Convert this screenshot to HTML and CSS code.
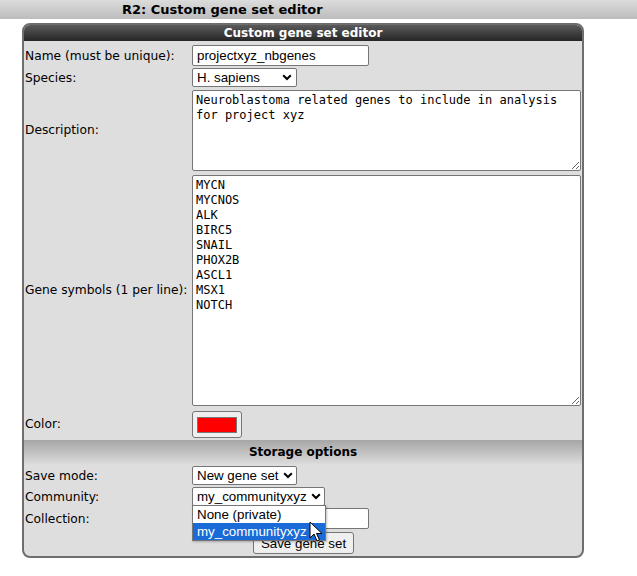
FILE: index.html
```html
<!DOCTYPE html>
<html>
<head>
<meta charset="utf-8">
<link rel="stylesheet" href="styles.css">
</head>
<body>
<div class="topbar"><span class="toptitle">R2: Custom gene set editor</span></div>
<div class="panel">
  <div class="panel-head">Custom gene set editor</div>
  <div class="form">
    <div class="lbl">Name (must be unique):</div>
    <div class="ctl"><input class="txt" type="text" value="projectxyz_nbgenes"></div>

    <div class="lbl">Species:</div>
    <div class="ctl"><div class="sel sel-species"><span>H. sapiens</span><svg class="chev" width="10" height="7" viewBox="0 0 10 7"><path d="M1.2 1.2 L5 5 L8.8 1.2" fill="none" stroke="#000" stroke-width="2"/></svg></div></div>

    <div class="lbl">Description:</div>
    <div class="ctl"><textarea class="area area-desc">Neuroblastoma related genes to include in analysis for project xyz</textarea></div>

    <div class="lbl">Gene symbols (1 per line):</div>
    <div class="ctl"><textarea class="area area-genes">MYCN
MYCNOS
ALK
BIRC5
SNAIL
PHOX2B
ASCL1
MSX1
NOTCH</textarea></div>

    <div class="lbl">Color:</div>
    <div class="ctl"><span class="colorbtn"><span class="swatch"></span></span></div>

    <div class="subhead">Storage options</div>

    <div class="lbl">Save mode:</div>
    <div class="ctl"><div class="sel sel-mode"><span>New gene set</span><svg class="chev" width="10" height="7" viewBox="0 0 10 7"><path d="M1.2 1.2 L5 5 L8.8 1.2" fill="none" stroke="#000" stroke-width="2"/></svg></div></div>

    <div class="lbl">Community:</div>
    <div class="ctl community">
      <div class="sel sel-comm"><span>my_communityxyz</span><svg class="chev" width="10" height="7" viewBox="0 0 10 7"><path d="M1.2 1.2 L5 5 L8.8 1.2" fill="none" stroke="#000" stroke-width="2"/></svg></div>
      <div class="popup">
        <div class="opt">None (private)</div>
        <div class="opt opt-hi">my_communityxyz</div>
      </div>
      <svg class="cursor" width="14" height="22" viewBox="0 0 14 22"><path d="M1 1 L1 17 L5 13 L8 20 L10.5 19 L7.5 12.5 L13 12.5 Z" fill="#fff" stroke="#000" stroke-width="1" stroke-linejoin="round"/></svg>
    </div>

    <div class="lbl">Collection:</div>
    <div class="ctl"><input class="txt" type="text" value=""></div>

    <div class="actions"><button class="btn">Save gene set</button></div>
  </div>
</div>
</body>
</html>
```
FILE: styles.css
```css
html, body { margin: 0; padding: 0; background: #fff; }
body { font-family: "DejaVu Sans", Verdana, sans-serif; font-size: 12.25px; color: #000; }

.topbar {
  height: 19px;
  background: linear-gradient(#dcdcdc, #bcbcbc);
  display: flex;
  align-items: center;
}
.toptitle {
  margin-left: 122px;
  font-family: "DejaVu Sans", Verdana, sans-serif;
  font-weight: bold;
  font-size: 13px;
}

.panel {
  margin: 4px 0 0 22px;
  width: 558px;
  border: 2px solid #6e6e6e;
  border-radius: 8px;
  background: #dedede;
}
.panel-head {
  height: 16px;
  line-height: 16px;
  background: linear-gradient(#5a5a5a, #262626);
  color: #fff;
  text-align: center;
  font-family: "DejaVu Sans", Verdana, sans-serif;
  font-weight: bold;
  font-size: 12px;
  border-radius: 6px 6px 0 0;
}

.form {
  display: grid;
  grid-template-columns: 166px 1fr;
  column-gap: 1px;
  padding: 3px 0 1px 1px;
}
.lbl { display: flex; align-items: center; }
.ctl { display: flex; align-items: center; padding: 1px 0; position: relative; }

.txt {
  box-sizing: border-box;
  width: 177px;
  height: 21px;
  margin: 0;
  padding: 1px 4px;
  border: 1px solid #767676;
  border-radius: 2px;
  font-family: "Liberation Sans", Arial, sans-serif;
  font-size: 13.33px;
  background: #fff;
}
.sel {
  box-sizing: border-box;
  height: 19px;
  padding: 0 4px 0 4px;
  border: 1px solid #767676;
  border-radius: 2px;
  background: #fff;
  font-family: "Liberation Sans", Arial, sans-serif;
  font-size: 13.33px;
  color: #000;
  display: flex;
  align-items: center;
  justify-content: space-between;
  white-space: nowrap;
}
.chev { flex: none; margin-left: 4px; }
.sel-species { width: 105px; }
.sel-mode { width: 105px; }
.sel-comm { width: 133px; }

.area {
  box-sizing: border-box;
  width: 389px;
  margin: 0;
  padding: 2px 3px;
  border: 1px solid #767676;
  border-radius: 2px;
  font-family: "DejaVu Sans Mono", monospace;
  font-size: 12px;
  line-height: 15px;
  background: #fff;
  display: block;
}
.area-desc { height: 81px; margin-top: 1px; }
.area-genes { height: 231px; margin: 2px 0 1px; }

.colorbtn {
  box-sizing: border-box;
  width: 50px;
  height: 27px;
  border: 1px solid #767676;
  border-radius: 3px;
  background: #efefef;
  display: flex;
  align-items: center;
  justify-content: center;
  margin: 2px 0 0;
}
.swatch {
  width: 38px;
  height: 14px;
  background: #ff0000;
  border: 1px solid #777;
}

.subhead {
  grid-column: 1 / -1;
  margin-left: -1px;
  height: 25px;
  line-height: 25px;
  text-align: center;
  font-weight: bold;
  font-size: 12px;
  background: linear-gradient(#a6a6a6, #d8d8d8 92%, #dedede);
  margin-top: 1px;
}

.popup {
  position: absolute;
  left: 0;
  top: 19px;
  width: 134px;
  box-sizing: border-box;
  border: 1px solid #767676;
  background: #fff;
  font-family: "Liberation Sans", Arial, sans-serif;
  font-size: 13.33px;
  z-index: 5;
  box-shadow: 1px 1px 2px rgba(0,0,0,0.25);
}
.opt { height: 17px; line-height: 17px; padding: 0 4px; }
.opt-hi { background: #1a6ad7; color: #fff; }
.cursor { position: absolute; left: 117px; top: 35px; z-index: 6; }

.actions {
  grid-column: 1 / -1;
  display: flex;
  justify-content: center;
  padding: 2px 0 1px;
}
.btn {
  box-sizing: border-box;
  height: 22px;
  width: 101px;
  margin: 0;
  padding: 0 6px;
  border: 1px solid #767676;
  border-radius: 3px;
  background: #efefef;
  font-family: "Liberation Sans", Arial, sans-serif;
  font-size: 13.33px;
  color: #000;
}
```
